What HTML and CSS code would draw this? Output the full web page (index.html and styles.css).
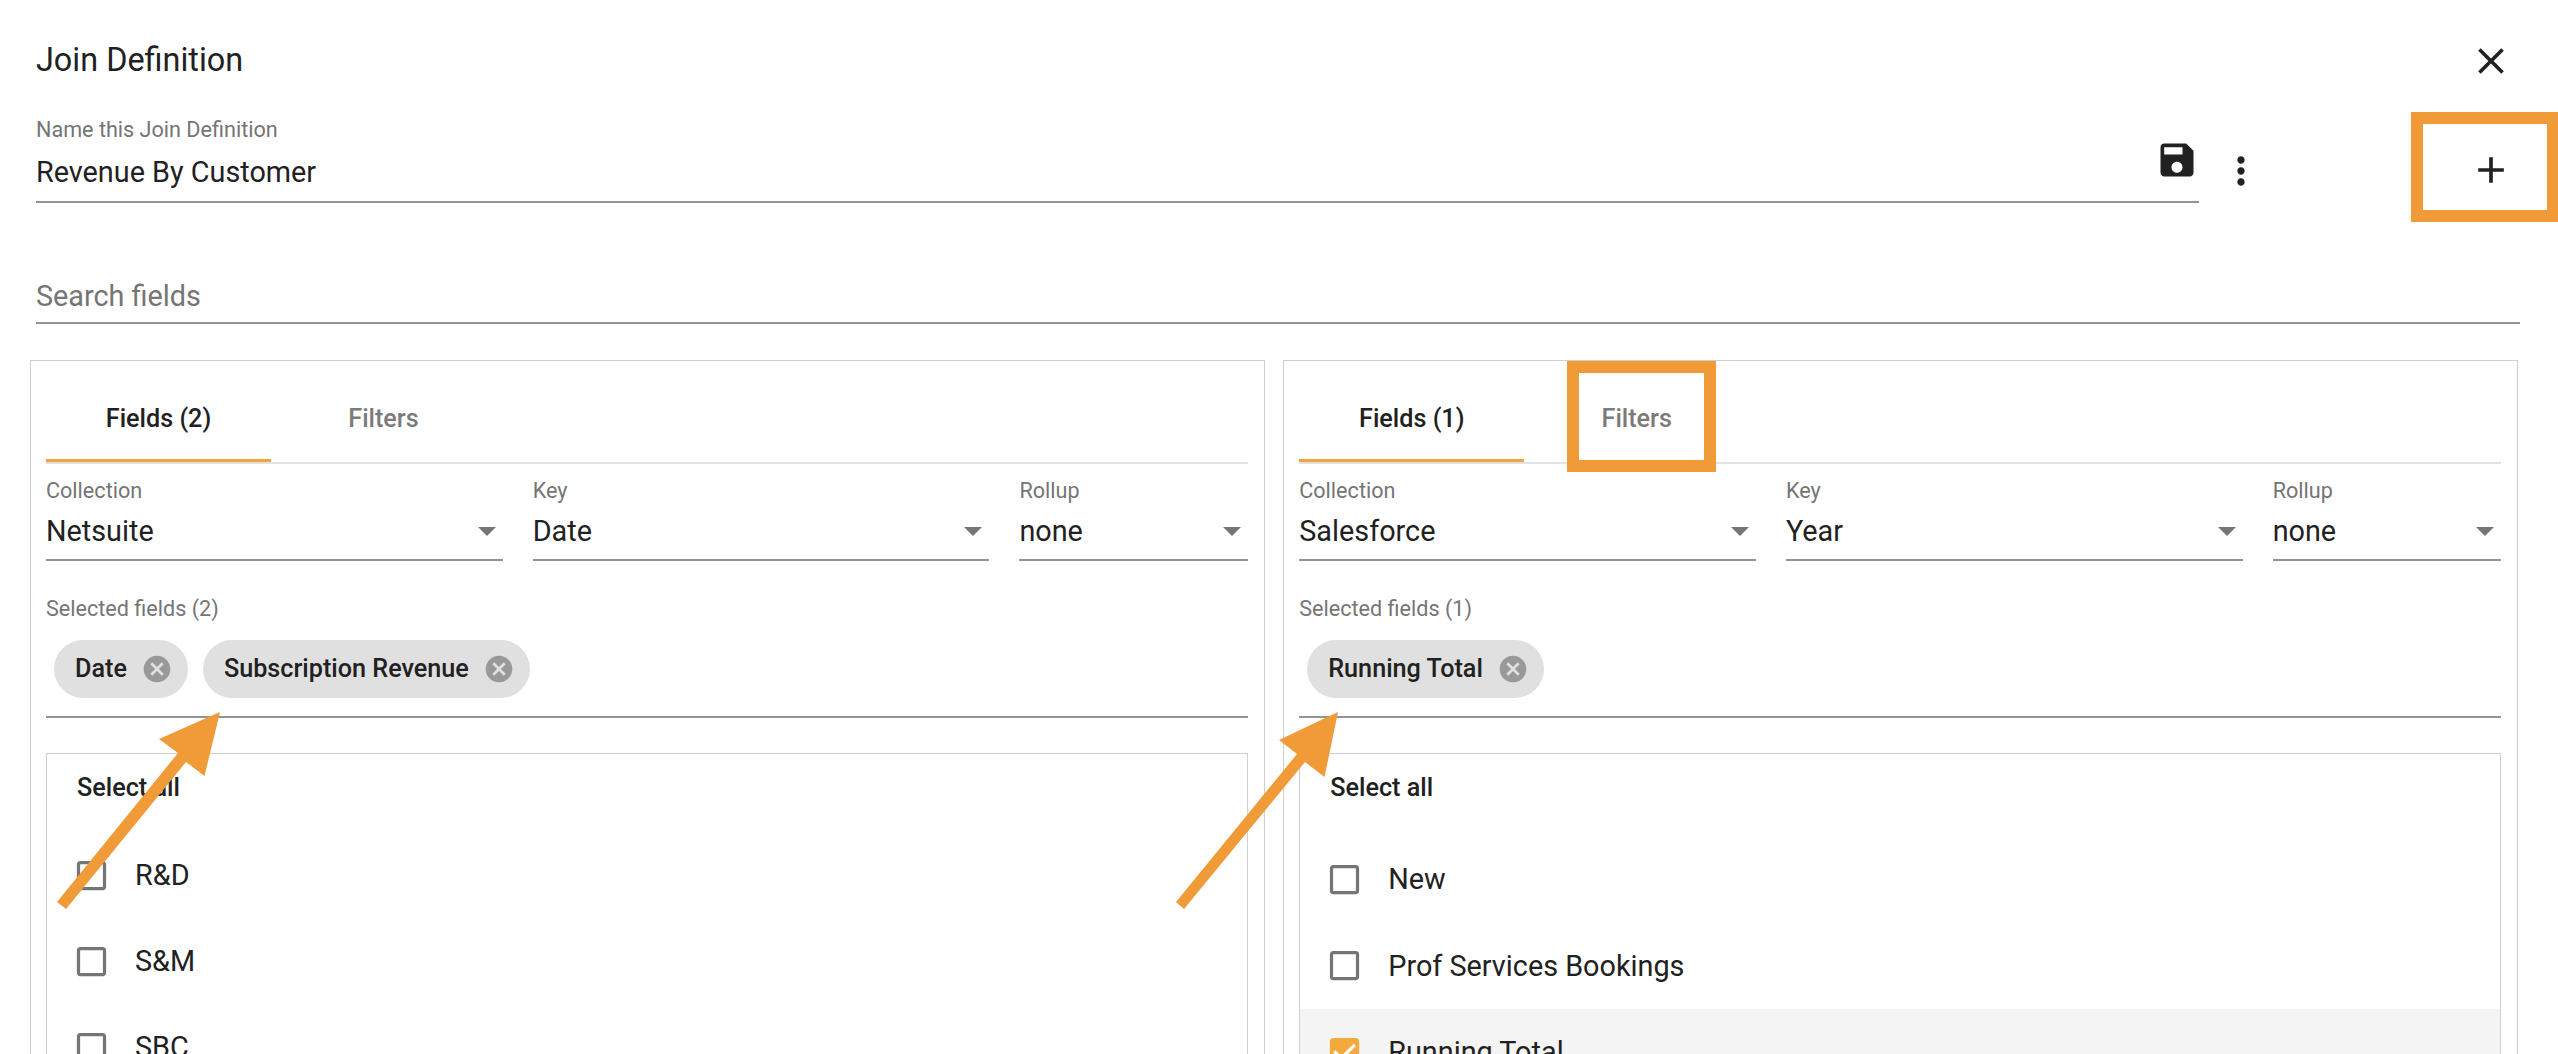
FILE: index.html
```html
<!DOCTYPE html>
<html lang="en">
<head>
<meta charset="utf-8">
<title>Join Definition</title>
<link rel="stylesheet" href="styles.css">
</head>
<body>
<svg class="defs" width="0" height="0" aria-hidden="true">
  <symbol id="i-cancel" viewBox="0 0 24 24"><path d="M12 2C6.47 2 2 6.47 2 12s4.47 10 10 10 10-4.47 10-10S17.53 2 12 2zm5 13.59L15.59 17 12 13.41 8.41 17 7 15.59 10.59 12 7 8.41 8.41 7 12 10.59 15.59 7 17 8.41 13.41 12 17 15.59z"/></symbol>
  <symbol id="i-box" viewBox="0 0 24 24"><path d="M19 5v14H5V5h14m0-2H5c-1.1 0-2 .9-2 2v14c0 1.1.9 2 2 2h14c1.1 0 2-.9 2-2V5c0-1.1-.9-2-2-2z"/></symbol>
  <symbol id="i-check" viewBox="0 0 24 24"><rect x="4" y="4" width="16" height="16" fill="#fff"/><path d="M19 3H5c-1.11 0-2 .9-2 2v14c0 1.1.89 2 2 2h14c1.11 0 2-.9 2-2V5c0-1.1-.89-2-2-2zm-9 14l-5-5 1.41-1.41L10 14.17l7.59-7.59L19 8l-9 9z"/></symbol>
</svg>
<div class="dialog">
  <header class="head">
    <h1 class="title">Join Definition</h1>
    <svg class="icon" viewBox="0 0 24 24"><path d="M19 6.41L17.59 5 12 10.59 6.41 5 5 6.41 10.59 12 5 17.59 6.41 19 12 13.41 17.59 19 19 17.59 13.41 12z"/></svg>
  </header>

  <div class="name-row">
    <div class="name-field">
      <div class="name-text">
        <div class="label">Name this Join Definition</div>
        <div class="value">Revenue By Customer</div>
      </div>
      <svg class="icon save" viewBox="0 0 24 24"><path d="M17 3H5c-1.11 0-2 .9-2 2v14c0 1.1.89 2 2 2h14c1.1 0 2-.9 2-2V7l-4-4zm-5 16c-1.66 0-3-1.34-3-3s1.34-3 3-3 3 1.34 3 3-1.34 3-3 3zm3-10H5V5h10v4z"/></svg>
    </div>
    <svg class="icon more" viewBox="0 0 24 24"><path d="M12 8c1.1 0 2-.9 2-2s-.9-2-2-2-2 .9-2 2 .9 2 2 2zm0 2c-1.1 0-2 .9-2 2s.9 2 2 2 2-.9 2-2-.9-2-2-2zm0 6c-1.1 0-2 .9-2 2s.9 2 2 2 2-.9 2-2-.9-2-2-2z"/></svg>
    <svg class="icon add" viewBox="0 0 24 24"><path d="M19 13h-6v6h-2v-6H5v-2h6V5h2v6h6v2z"/></svg>
  </div>

  <div class="search">Search fields</div>

  <div class="panels">
    <section class="panel">
      <div class="tabs">
        <div class="tab tab-active">Fields (2)</div>
        <div class="tab">Filters</div>
      </div>
      <div class="selects">
        <div class="select"><div class="label">Collection</div><div class="select-value">Netsuite<span class="caret"></span></div></div>
        <div class="select"><div class="label">Key</div><div class="select-value">Date<span class="caret"></span></div></div>
        <div class="select"><div class="label">Rollup</div><div class="select-value">none<span class="caret"></span></div></div>
      </div>
      <div class="selected">
        <div class="label">Selected fields (2)</div>
        <div class="chips">
          <span class="chip">Date<svg class="chip-x"><use href="#i-cancel"/></svg></span>
          <span class="chip">Subscription Revenue<svg class="chip-x"><use href="#i-cancel"/></svg></span>
        </div>
      </div>
      <div class="list">
        <div class="select-all">Select all</div>
        <div class="rows">
          <div class="row"><svg class="cb"><use href="#i-box"/></svg>R&amp;D</div>
          <div class="row"><svg class="cb"><use href="#i-box"/></svg>S&amp;M</div>
          <div class="row"><svg class="cb"><use href="#i-box"/></svg>SBC</div>
        </div>
      </div>
    </section>

    <section class="panel">
      <div class="tabs">
        <div class="tab tab-active">Fields (1)</div>
        <div class="tab">Filters</div>
      </div>
      <div class="selects">
        <div class="select"><div class="label">Collection</div><div class="select-value">Salesforce<span class="caret"></span></div></div>
        <div class="select"><div class="label">Key</div><div class="select-value">Year<span class="caret"></span></div></div>
        <div class="select"><div class="label">Rollup</div><div class="select-value">none<span class="caret"></span></div></div>
      </div>
      <div class="selected">
        <div class="label">Selected fields (1)</div>
        <div class="chips">
          <span class="chip">Running Total<svg class="chip-x"><use href="#i-cancel"/></svg></span>
        </div>
      </div>
      <div class="list">
        <div class="select-all">Select all</div>
        <div class="rows rows-scrolled">
          <div class="row"><svg class="cb"><use href="#i-box"/></svg>New</div>
          <div class="row"><svg class="cb"><use href="#i-box"/></svg>Prof Services Bookings</div>
          <div class="row row-on"><svg class="cb cb-on"><use href="#i-check"/></svg>Running Total</div>
        </div>
      </div>
    </section>
  </div>

  <div class="mark mark-add"></div>
  <div class="mark mark-filters"></div>
  <svg class="arrows" viewBox="0 0 2558 1054">
    <polygon points="220,712 159,739 178,753 57,902 66,909 186,762 204.500,776"/>
    <polygon points="1338,712 1279,740 1297,754 1176,902 1184,909 1305,762 1324.500,777"/>
  </svg>
</div>
</body>
</html>
```

FILE: styles.css
```css
* { box-sizing: border-box; }
html, body { margin: 0; padding: 0; background: #fff; }
body { font-family: Roboto, "Liberation Sans", sans-serif; color: #212121; }
.defs { position: absolute; }
.dialog { position: relative; width: 2558px; height: 1054px; overflow: hidden; background: #fff; }

.icon { display: block; width: 44px; height: 44px; fill: #212121; flex: none; }

.head { display: flex; justify-content: space-between; align-items: flex-start; height: 112px; padding: 39px 45px 0 36px; }
.title { margin: 0; font-size: 32.4px; font-weight: 400; line-height: 42px; color: #212121; }

.label { font-size: 21.6px; line-height: 28px; color: #757575; }

.name-row { display: flex; align-items: flex-start; height: 91px; padding: 0 45px 0 36px; }
.name-field { display: flex; justify-content: space-between; align-items: flex-start; width: 2163px; height: 91px; border-bottom: 2px solid #949494; }
.name-text .label { margin-top: 4px; }
.name-text .value { font-size: 28.8px; line-height: 40px; margin-top: 8px; }
.save { margin: 26px 0 0 0; }
.more { margin: 37px 0 0 20px; }
.add { margin: 36px 0 0 auto; }

.search { width: 2484px; height: 121px; margin-left: 36px; padding-top: 73px; border-bottom: 2px solid #949494; font-size: 28.8px; line-height: 40px; color: #757575; }

.panels { display: flex; gap: 18.5px; margin: 36px 0 0 30px; }
.panel { width: 1234.75px; height: 720px; border: 1px solid #cfcfcf; border-bottom: 0; padding: 0 16px 0 15px; }

.tabs { display: flex; height: 103px; border-bottom: 2px solid #e2e2e2; }
.tab { display: flex; align-items: center; justify-content: center; width: 225px; height: 101px; padding-top: 16px; border-bottom: 3px solid transparent; font-size: 25.2px; font-weight: 500; color: #7b7b7b; }
.tab-active { border-bottom-color: #f0a43a; color: #212121; }

.selects { display: grid; grid-template-columns: 2fr 2fr 1fr; gap: 30px; margin-top: 13px; }
.select-value { display: flex; justify-content: space-between; align-items: center; height: 56px; padding-bottom: 2px; border-bottom: 2px solid #949494; font-size: 28.8px; }
.select .label { height: 28px; }
.caret { width: 0; height: 0; margin-right: 7px; border-left: 9px solid transparent; border-right: 9px solid transparent; border-top: 9px solid #757575; }

.selected { height: 123px; margin-top: 34px; border-bottom: 2px solid #949494; }
.chips { display: flex; gap: 15px; margin-top: 17px; padding-left: 8px; }
.chip { display: inline-flex; align-items: center; height: 58px; padding: 0 15px 1px 21px; border-radius: 29px; background: #e0e0e0; font-size: 25.2px; font-weight: 500; white-space: nowrap; }
.chip-x { width: 32px; height: 32px; margin-left: 14px; fill: #999; }

.list { height: 320px; margin-top: 35px; border: 1px solid #cfcfcf; border-bottom: 0; }
.select-all { padding: 18px 0 0 30px; font-size: 25.2px; font-weight: 500; line-height: 32px; }
.rows { margin-top: 28px; }
.rows-scrolled { margin-top: 32px; }
.rows-scrolled .row { height: 86.5px; }
.row { display: flex; align-items: center; height: 86px; padding-left: 25px; font-size: 28.8px; color: #212121; }
.row-on { background: #f4f4f4; }
.cb { width: 39px; height: 39px; margin-right: 24px; fill: #757575; flex: none; }
.cb-on { fill: #f2aa3c; }

.mark { position: absolute; border: 12px solid #f09a38; }
.mark-add { left: 2411px; top: 112px; width: 147px; height: 110px; border-right-width: 11px; }
.mark-filters { left: 1567px; top: 361px; width: 149px; height: 111px; }
.arrows { position: absolute; left: 0; top: 0; width: 2558px; height: 1054px; fill: #f09a38; pointer-events: none; }
```
